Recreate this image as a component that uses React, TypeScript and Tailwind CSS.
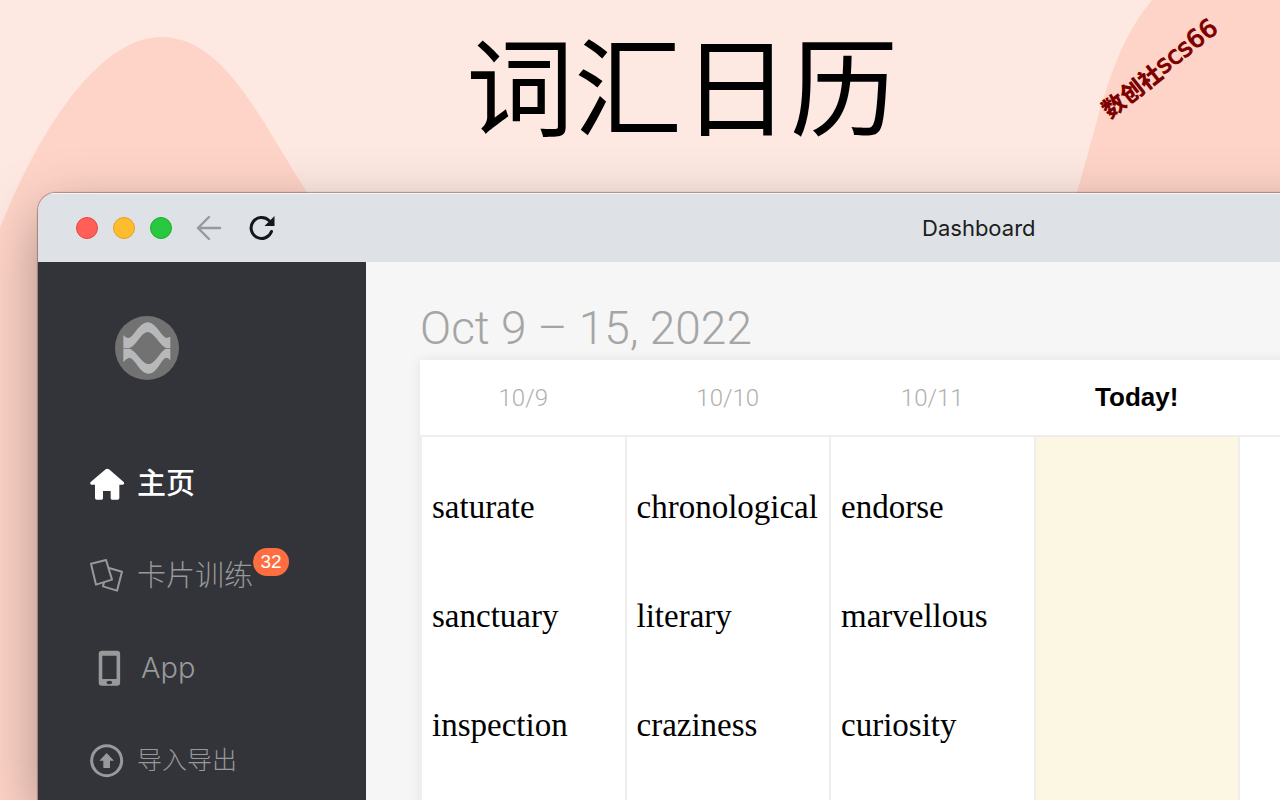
import React, { FC, ReactNode } from "react";

interface NavItemProps {
  label: string;
  icon: ReactNode;
  className: string;
  badge?: number;
}

// only the days up to today carry a label
const days = ["10/9", "10/10", "10/11", "Today!", "", "", ""];
const TODAY = 3;

const words = [
  ["saturate", "chronological", "endorse", "", "", "", ""],
  ["sanctuary", "literary", "marvellous", "", "", "", ""],
  ["inspection", "craziness", "curiosity", "", "", "", ""],
  ["", "", "", "", "", "", ""],
];

const HomeIcon = () => (
  <svg viewBox="60 50 105 105" className="size-[35px]" fill="currentColor">
    <path d="M107 57Q112 53 117 57L161 95Q165 102 158 103H148V143Q148 148 143 148H126Q122 148 122 144V122H99V144Q99 148 95 148H80Q75 148 75 143V103H65Q58 102 62 95Z" />
  </svg>
);

const CardsIcon = () => (
  <svg
    viewBox="60 320 105 105"
    className="size-[35px]"
    fill="none"
    stroke="currentColor"
    strokeWidth="6"
    strokeLinejoin="round"
  >
    <path d="M63 334L108 323L126 382L78 397Z" />
    <path d="M117 347L156 358L141 415L99 402L102 390" />
  </svg>
);

const PhoneIcon = () => (
  <svg viewBox="54 54 111 111" className="size-[37px]" fill="currentColor">
    <path
      fillRule="evenodd"
      d="M94 55H140Q150 55 150 65V153Q150 163 140 163H94Q84 163 84 153V65Q84 55 94 55ZM95 70V142H139V70ZM117 147A8 5 0 1 0 117 158A8 5 0 1 0 117 147Z"
    />
  </svg>
);

const UploadIcon = () => (
  <svg viewBox="59 333 105 105" className="size-[35px]" fill="currentColor">
    <circle cx="109" cy="386" r="45" fill="none" stroke="currentColor" strokeWidth="9" />
    <path d="M109 363L131 386H119V408H99V386H87Z" />
  </svg>
);

const Logo = () => (
  <svg viewBox="0 0 192 192" className="size-16" aria-label="logo">
    <circle cx="96" cy="96" r="96" fill="#727272" />
    <g fill="#b7b8ba">
      <path d="M25 57Q32 67 40 66C56 66 72 19 98 19C124 19 140 66 156 66L166 62V96H155C138 94 118 48 98 48C78 48 62 94 42 96H25Z" />
      <path d="M25 98H42C62 100 80 144 101 144C122 144 138 100 155 98H166V133Q160 125 155 125C138 126 128 173 101 173C74 173 60 125 42 125Q34 127 25 138Z" />
    </g>
  </svg>
);

const NavItem: FC<NavItemProps> = ({ label, icon, className, badge }) => (
  <li>
    <a href="#" className={`flex items-center ${className}`}>
      <span className="flex w-9 justify-center">{icon}</span>
      <span className="relative">
        {label}
        {badge && (
          <span className="absolute -top-1.5 left-full flex h-7 w-9 items-center justify-center rounded-full bg-[#ff6e40] font-['Liberation_Sans'] text-[19px] font-normal text-white">
            {badge}
          </span>
        )}
      </span>
    </a>
  </li>
);

const Background = () => (
  <svg
    viewBox="0 0 1280 800"
    preserveAspectRatio="xMinYMin slice"
    className="absolute inset-0 size-full"
    fill="#ffd4c8"
  >
    <path d="M0 228C45 115 105 37 161 37C225 37 260 120 307 192L600 800H0Z" />
    <path d="M1152 0C1110 50 1100 115 1077 192L900 800H1280V0Z" />
  </svg>
);

const TitleBar = () => (
  <header className="relative flex h-[69px] shrink-0 items-center border-t border-[#f4f6f8] bg-[#dee1e5] pl-[38px]">
    <div className="flex gap-[15px]">
      <button aria-label="close" className="size-[22px] rounded-full border border-[#e2463f] bg-[#ff5f57]" />
      <button aria-label="minimize" className="size-[22px] rounded-full border border-[#e1a325] bg-[#febc2e]" />
      <button aria-label="zoom" className="size-[22px] rounded-full border border-[#1dad2b] bg-[#28c840]" />
    </div>
    <button aria-label="back" className="ml-6">
      <svg viewBox="0 0 26 26" className="size-[26px]" fill="none" stroke="#97999c" strokeWidth="2.4" strokeLinecap="round" strokeLinejoin="round">
        <path d="M24 13H2M13 2L2 13L13 24" />
      </svg>
    </button>
    <button aria-label="reload" className="ml-[26px]">
      <svg viewBox="0 0 28 28" className="size-7" fill="none" stroke="#15171a" strokeWidth="3" strokeLinecap="round">
        <path d="M23.5 17.5A10.5 10.5 0 1 1 21 6.5" />
        <path d="M26.5 2V12H16.5Z" fill="#15171a" stroke="none" />
      </svg>
    </button>
    <h2 className="absolute inset-x-0 text-center font-['Inter'] text-[22px] text-[#1b1d20]">
      Dashboard
    </h2>
  </header>
);

const Sidebar = () => (
  <aside className="w-[328px] shrink-0 bg-[#323439] pl-[51px] pt-[54px] font-['Inter','Noto_Sans_CJK_SC',sans-serif]">
    <div className="pl-[26px]">
      <Logo />
    </div>
    <ul className="mt-[82px] flex flex-col gap-[48px] text-[#98999a]">
      <NavItem label="主页" icon={<HomeIcon />} className="gap-3 text-[29px]/[44px] font-medium text-white" />
      <NavItem label="卡片训练" icon={<CardsIcon />} className="gap-3 text-[29px]/[44px] font-light" badge={32} />
      <NavItem label="App" icon={<PhoneIcon />} className="gap-4 text-[29px]/[44px] font-light" />
      <NavItem label="导入导出" icon={<UploadIcon />} className="gap-3 text-[25px]/[44px] font-light" />
    </ul>
  </aside>
);

const Calendar = () => (
  <main className="flex-1 bg-[#f6f6f6] pl-[54px] pr-[66px] pt-[38px]">
    <h3 className="pb-1 font-['Roboto'] text-[46px]/[56px] font-light text-[#a5a5a5]">
      Oct 9 – 15, 2022
    </h3>
    <table className="w-full table-fixed border-collapse bg-white shadow-[0_0_12px_rgba(0,0,0,0.08)]">
      <thead>
        <tr className="h-[76px] border-b-2 border-[#eeeeef]">
          {days.map((day, i) => (
            <th
              key={i}
              className={
                i === TODAY
                  ? "font-['Liberation_Sans'] text-[26px] font-bold text-black"
                  : "font-['Roboto'] text-[24px] font-light text-[#b0b0b0]"
              }
            >
              {day}
            </th>
          ))}
        </tr>
      </thead>
      <tbody>
        {words.map((row, r) => (
          <tr key={r}>
            {row.map((word, i) => (
              <td
                key={i}
                className={`h-[109px] border-x-2 border-[#eeeeef] px-[10px] align-bottom font-['Liberation_Serif'] text-[33px]/[38px] text-black ${
                  i === TODAY ? "bg-[#fbf7e3]" : ""
                }`}
              >
                <div className="h-[57px]">{word}</div>
              </td>
            ))}
          </tr>
        ))}
      </tbody>
    </table>
  </main>
);

export default function App() {
  return (
    <div className="relative h-screen overflow-hidden bg-[#fee9e2]">
      <Background />
      <div className="relative flex h-full flex-col">
        <h1 className="h-[193px] shrink-0 pl-[84px] text-center font-['Noto_Sans_CJK_SC'] text-[108px]/[162px] font-normal text-black">
          词汇日历
        </h1>
        <div className="ml-[38px] flex w-[147vw] grow flex-col overflow-hidden rounded-tl-[18px] shadow-[0_0_1px_1px_rgba(90,60,50,0.45),0_20px_60px_rgba(0,0,0,0.34)]">
          <TitleBar />
          <div className="flex grow">
            <Sidebar />
            <Calendar />
          </div>
        </div>
      </div>
      <div className="absolute right-[50px] top-[53px] flex -rotate-[38deg] items-center whitespace-nowrap text-[#7c0000]">
        <span className="font-['Noto_Sans_CJK_SC'] text-[23px]/[30px] font-black">数创社</span>
        <span className="font-['DejaVu_Sans'] text-[25px]/[30px] [-webkit-text-stroke:1px]">scs66</span>
      </div>
    </div>
  );
}
